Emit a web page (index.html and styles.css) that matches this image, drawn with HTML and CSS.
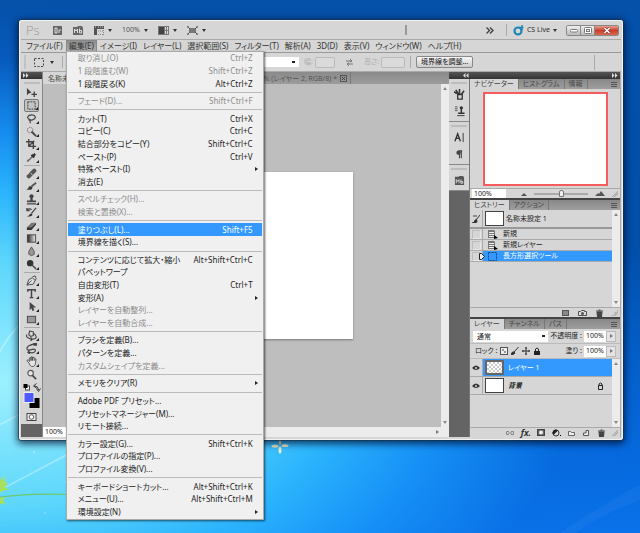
FILE: index.html
```html
<!DOCTYPE html>
<html lang="ja">
<head>
<meta charset="utf-8">
<title>Photoshop</title>
<link rel="stylesheet" href="styles.css">
</head>
<body>
<div class="desktop">
  <svg class="wallpaper" viewBox="0 0 640 533" preserveAspectRatio="none" aria-hidden="true">
    <path d="M-10 370Q10 330 24 322M-10 430L24 412M0 490L70 453" stroke="#fff" stroke-opacity=".35" stroke-width="1.5" fill="none"/>
    <path d="M560 533Q610 500 640 485V500Q600 515 575 533Z" fill="#fff" fill-opacity=".04"/>
    <path d="M0 497Q30 493 70 494.500" stroke="#6cc86a" stroke-width="1.200" fill="none"/>
    <path d="M0 477l2 4 3-6 0 6 3 4-4 1 5 4-5 0 -4 3zM0 498l6-1-3 3 3 5-4-2-2 2z" fill="#a8e05a"/>
    <g fill="#f3efc0"><ellipse cx="275" cy="446" rx="3.500" ry="1.600"/><ellipse cx="285" cy="445.500" rx="3.500" ry="1.600"/><ellipse cx="280" cy="450" rx="1.400" ry="3.500"/><ellipse cx="280" cy="442" rx="1.300" ry="2.500"/></g>
    <g fill="#fff" fill-opacity=".6"><circle cx="34" cy="452" r=".8"/><circle cx="45" cy="513" r=".7"/><circle cx="66" cy="482" r=".8"/><circle cx="30" cy="470" r=".5"/></g>
  </svg>

  <main class="window">
    <header class="titlebar">
      <span class="logo">Ps</span>
      <button class="tb" aria-label="Bridge"><svg width="9" height="9"><rect width="9" height="9" fill="#666"/><path d="M2 2v5h2V2zM6 4v3M6 4h2" stroke="#ddd" fill="none"/></svg></button>
      <button class="tb" aria-label="Mini Bridge"><svg width="10" height="9"><path d="M0 1h4l1-1h4l1 2v7H0z" fill="#666"/><path d="M1.500 7V3l1.500 2 1.500-2v4M6.500 2.500V7h2V4.500h-2" stroke="#ddd" fill="none"/></svg></button>
      <button class="tb wide" aria-label="表示"><svg width="10" height="9"><path d="M0 0h10v3H3v6H0z" fill="#555"/><path d="M1 1h1M4 1h1M6 1h1M8 1h1" stroke="#ccc"/><path d="M4 5h6M9.500 4v5M4 8.500h6" stroke="#888" stroke-dasharray="1 1"/></svg><i class="down"></i></button>
      <button class="tb wide">100%<i class="down"></i></button>
      <button class="tb wide" aria-label="配置"><svg width="11" height="9"><rect width="11" height="9" fill="#777"/><rect x="1" y="1" width="5" height="7" fill="#444"/><path d="M7.500 1v3M9.500 1v3M7.500 5v3M9.500 5v3" stroke="#ddd"/></svg><i class="down"></i></button>
      <button class="tb wide" aria-label="スクリーンモード"><svg width="11" height="9"><rect x="2" y="2" width="7" height="5" fill="#777"/><path d="M0 2V0h2M9 0h2v2M0 7v2h2M9 9h2V7M1 1l2 2M10 1L8 3M1 8l2-2M10 8L8 6" stroke="#555" fill="none"/></svg><i class="down"></i></button>
      <i class="bar"></i>
      <div class="title-right">
        <svg width="8" height="7" aria-hidden="true"><path d="M.5.5l3 3-3 3M4 .5l3 3-3 3" stroke="#444" stroke-width="1.400" fill="none"/></svg>
        <i class="rule"></i>
        <button class="cslive"><svg width="11" height="11"><circle cx="5" cy="6" r="3.500" stroke="#1d86b4" stroke-width="2.200" fill="none"/><path d="M9 0v5M6.500 2.500h4" stroke="#1d86b4" stroke-width="1.500"/></svg>CS Live<i class="down"></i></button>
        <div class="winbtns">
          <button aria-label="最小化"><svg width="8" height="7"><rect x=".5" y="2.500" width="7" height="2.500" rx="1" fill="#fff" stroke="#777"/></svg></button>
          <button aria-label="最大化"><svg width="8" height="7"><rect x=".5" y=".5" width="7" height="6" rx="1" fill="#fff" stroke="#777"/><rect x="2.500" y="2.500" width="3" height="2" fill="none" stroke="#777"/></svg></button>
          <button class="close" aria-label="閉じる"><svg width="8" height="7"><path d="M1.500 1l5 5M6.500 1l-5 5" stroke="#733" stroke-width="2.600"/><path d="M1.500 1l5 5M6.500 1l-5 5" stroke="#fff" stroke-width="1.500"/></svg></button>
        </div>
      </div>
    </header>

    <nav class="menubar">
      <button>ファイル(F)</button>
      <div class="open">
        <button class="active">編集(E)</button>
        <ul class="menu">
          <li><button disabled>取り消し(O)<kbd>Ctrl+Z</kbd></button></li>
          <li><button disabled>1 段階進む(W)<kbd>Shift+Ctrl+Z</kbd></button></li>
          <li><button>1 段階戻る(K)<kbd>Alt+Ctrl+Z</kbd></button></li>
          <li class="sep"></li>
          <li><button disabled>フェード(D)...<kbd>Shift+Ctrl+F</kbd></button></li>
          <li class="sep"></li>
          <li><button>カット(T)<kbd>Ctrl+X</kbd></button></li>
          <li><button>コピー(C)<kbd>Ctrl+C</kbd></button></li>
          <li><button>結合部分をコピー(Y)<kbd>Shift+Ctrl+C</kbd></button></li>
          <li><button>ペースト(P)<kbd>Ctrl+V</kbd></button></li>
          <li><button class="sub">特殊ペースト(I)</button></li>
          <li><button>消去(E)</button></li>
          <li class="sep"></li>
          <li><button disabled>スペルチェック(H)...</button></li>
          <li><button disabled>検索と置換(X)...</button></li>
          <li class="sep"></li>
          <li><button class="hot">塗りつぶし(L)...<kbd>Shift+F5</kbd></button></li>
          <li><button>境界線を描く(S)...</button></li>
          <li class="sep"></li>
          <li><button>コンテンツに応じて拡大・縮小<kbd>Alt+Shift+Ctrl+C</kbd></button></li>
          <li><button>パペットワープ</button></li>
          <li><button>自由変形(T)<kbd>Ctrl+T</kbd></button></li>
          <li><button class="sub">変形(A)</button></li>
          <li><button disabled>レイヤーを自動整列...</button></li>
          <li><button disabled>レイヤーを自動合成...</button></li>
          <li class="sep"></li>
          <li><button>ブラシを定義(B)...</button></li>
          <li><button>パターンを定義...</button></li>
          <li><button disabled>カスタムシェイプを定義...</button></li>
          <li class="sep"></li>
          <li><button class="sub">メモリをクリア(R)</button></li>
          <li class="sep"></li>
          <li><button>Adobe PDF プリセット...</button></li>
          <li><button>プリセットマネージャー(M)...</button></li>
          <li><button>リモート接続...</button></li>
          <li class="sep"></li>
          <li><button>カラー設定(G)...<kbd>Shift+Ctrl+K</kbd></button></li>
          <li><button>プロファイルの指定(P)...</button></li>
          <li><button>プロファイル変換(V)...</button></li>
          <li class="sep"></li>
          <li><button>キーボードショートカット...<kbd>Alt+Shift+Ctrl+K</kbd></button></li>
          <li><button>メニュー(U)...<kbd>Alt+Shift+Ctrl+M</kbd></button></li>
          <li><button class="sub">環境設定(N)</button></li>
        </ul>
      </div>
      <button>イメージ(I)</button>
      <button>レイヤー(L)</button>
      <button>選択範囲(S)</button>
      <button>フィルター(T)</button>
      <button>解析(A)</button>
      <button>3D(D)</button>
      <button>表示(V)</button>
      <button>ウィンドウ(W)</button>
      <button>ヘルプ(H)</button>
    </nav>

    <section class="options">
      <i class="vgrip"></i>
      <button class="preset" aria-label="長方形選択ツール"><svg width="10" height="9"><rect x=".5" y=".5" width="9" height="8" fill="none" stroke="#444" stroke-dasharray="2 1.500"/></svg><i class="down"></i></button>
      <i class="rule"></i>
      <button class="mode" aria-label="新規選択"><svg width="7" height="7"><rect width="6" height="6" fill="#fff" stroke="#666"/></svg></button>
      <select class="style" aria-label="スタイル"><option></option></select>
      <label class="dim">幅: <input disabled></label>
      <svg class="swap" width="7" height="7" aria-hidden="true"><path d="M0 2h6M4 0l2 2-2 1M7 5H1M3 3.500L1 5l2 2" stroke="#777" fill="none"/></svg>
      <label class="dim tall">高さ: <input disabled></label>
      <i class="rule"></i>
      <button class="refine">境界線を調整...</button>
      <i class="rule far"></i>
    </section>

    <div class="work">
      <aside class="tools">
        <div class="darkhead"><svg width="6" height="5"><path d="M0 0l2.500 2.500L0 5zM3 0l2.500 2.500L3 5z" fill="#ddd"/></svg></div>
        <i class="grip"></i>
        <div class="toolset">
          <button aria-label="移動"><svg viewBox="0 0 12 12"><path d="M1 1v8l2-2 3-1z" fill="#444"/><path d="M9 5v6M6 8h6" stroke="#444" stroke-width="1.500"/></svg></button>
          <button class="picked" aria-label="長方形選択"><svg viewBox="0 0 12 12"><rect x="2" y="2" width="8" height="8" fill="none" stroke="#333" stroke-dasharray="2 1"/></svg></button>
          <button class="more" aria-label="なげなわ"><svg viewBox="0 0 12 12"><path d="M4 7C0 6 2 2 6 2s6 3 2 5-6 0-4 0-1 2 1 4" fill="none" stroke="#444" stroke-width="1.300"/></svg></button>
          <button class="more" aria-label="クイック選択"><svg viewBox="0 0 12 12"><circle cx="4.500" cy="4.500" r="3" fill="none" stroke="#666" stroke-dasharray="1.500 1"/><path d="M6 6l5 5" stroke="#444" stroke-width="2"/></svg></button>
          <button class="more" aria-label="切り抜き"><svg viewBox="0 0 12 12"><path d="M3 0v8h8M0 3h8v8M3 8l6-6" fill="none" stroke="#444" stroke-width="1.500"/></svg></button>
          <button class="more" aria-label="スポイト"><svg viewBox="0 0 12 12"><path d="M2 10l5-5M1.500 10.500l1-2" stroke="#666" stroke-width="1.500"/><path d="M6 3l3 3M7 5l3-3" stroke="#333" stroke-width="2.500"/></svg></button>
          <hr>
          <button class="more" aria-label="修復ブラシ"><svg viewBox="0 0 12 12"><path d="M3 9l6-6" stroke="#555" stroke-width="4.500" stroke-linecap="round"/><path d="M5 5.500l2 2M4 4Q2 4 2 7" stroke="#ddd" fill="none"/></svg></button>
          <button class="more" aria-label="ブラシ"><svg viewBox="0 0 12 12"><path d="M6 6l5-4" stroke="#555" stroke-width="2"/><path d="M0 9q3 0 3-3 3-1 4 1 0 4-7 2z" fill="#333"/></svg></button>
          <button class="more" aria-label="スタンプ"><svg viewBox="0 0 12 12"><circle cx="6" cy="2.500" r="2.300" fill="#444"/><path d="M5 4h2l.5 3H11v2H1V7h3.500zM1 10h10v1.500H1z" fill="#444"/></svg></button>
          <button class="more" aria-label="ヒストリーブラシ"><svg viewBox="0 0 12 12"><path d="M1 10q3 0 3-2 2-2 3 0 0 3-6 2z" fill="#333"/><path d="M6 7l5-6M1 3q3-2 5 0M1 1v3h3" stroke="#444" stroke-width="1.400" fill="none"/></svg></button>
          <button class="more" aria-label="消しゴム"><svg viewBox="0 0 12 12"><path d="M1 8l5-5h5l-5 5z" fill="#777"/><path d="M1 8h5l5-5v2l-5 6H1z" fill="#333"/></svg></button>
          <button class="more" aria-label="グラデーション"><svg viewBox="0 0 12 12"><defs><linearGradient id="g"><stop stop-color="#222"/><stop offset="1" stop-color="#eee"/></linearGradient></defs><rect x="1.500" y="2" width="9" height="8" fill="url(#g)" stroke="#444"/></svg></button>
          <button class="more" aria-label="ぼかし"><svg viewBox="0 0 12 12"><path d="M6 1Q2 6 3 9q3 3 6 0 1-3-3-8z" fill="#999" stroke="#555"/></svg></button>
          <button class="more" aria-label="覆い焼き"><svg viewBox="0 0 12 12"><circle cx="4.500" cy="4.500" r="3.500" fill="#333"/><path d="M6 6l5 5" stroke="#444" stroke-width="1.500"/></svg></button>
          <hr>
          <button class="more" aria-label="ペン"><svg viewBox="0 0 12 12"><path d="M1 11l2-6 4-2 3 3-2 4zM1 11l5-5M7 2l3-1 1 3-1 2" fill="#ddd" stroke="#444"/></svg></button>
          <button class="more" aria-label="文字"><svg viewBox="0 0 12 12"><path d="M2 4V2h8v2M6 2v9M4 10.500h4" fill="none" stroke="#444" stroke-width="1.600"/></svg></button>
          <button class="more" aria-label="パス選択"><svg viewBox="0 0 12 12"><path d="M4 1v9l2-2 1 3 2-1-1-3h3z" fill="#444"/></svg></button>
          <button class="more" aria-label="長方形"><svg viewBox="0 0 12 12"><rect x="1.500" y="2.500" width="9" height="7" fill="#999" stroke="#444"/></svg></button>
          <hr>
          <button class="more" aria-label="3D 回転"><svg viewBox="0 0 12 12"><path d="M4 1l4 1v4L5 7 3 5zM1 5q-2 3 5 5 6 0 5-3-1-3-3-3M5 8l2 2-2 2" fill="none" stroke="#444" stroke-width="1.200"/></svg></button>
          <button class="more" aria-label="3D カメラ"><svg viewBox="0 0 12 12"><path d="M9 1Q1 3 1 6t6 1q4-1 3 2-2 3-7 1M4 8L2 10l2 2" fill="none" stroke="#444" stroke-width="1.300"/><path d="M8 0h4v3H8z" fill="#444"/></svg></button>
          <button class="more" aria-label="手のひら"><svg viewBox="0 0 12 12"><path d="M3.500 8L1 5l1.500-1L4 6V2h1.500v3V1H7v4l.5-3.500H9V5l1-2 1 .5-1 6q-1 2.500-4 2-2-1-2.500-3.500z" fill="#e6e6e6" stroke="#444" stroke-width=".9"/></svg></button>
          <button aria-label="ズーム"><svg viewBox="0 0 12 12"><circle cx="5" cy="4.500" r="3" fill="#e4e4e4" stroke="#555" stroke-width="1.200"/><path d="M7 7l4 4" stroke="#444" stroke-width="1.800"/></svg></button>
        </div>
        <svg class="swatches" width="18" height="41" viewBox="0 0 18 41" role="img" aria-label="描画色と背景色"><rect x="2" y="5" width="4" height="4" fill="#fff" stroke="#444"/><rect y="3" width="4" height="4" fill="#000"/><path d="M11 5q4 0 4 4M13 2.500L10 5l3 2M13 7.500l2 3 2-3" fill="none" stroke="#333"/><rect x="6" y="17" width="10" height="10" fill="#000"/><rect x=".5" y="11.500" width="10" height="10" fill="#4f5bff" stroke="#eee"/><rect x="3.500" y="32.500" width="9" height="7" fill="#f2f2f2" stroke="#444"/><circle cx="8" cy="36" r="2.300" fill="#fff" stroke="#555"/></svg>
      </aside>

      <section class="document">
        <div class="doctabs">
          <button class="current">名称未設定 1</button>
          <button>名称未設定 2 @ 100% (レイヤー 2, RGB/8) * <svg width="7" height="7"><rect x=".5" y=".5" width="6" height="6" fill="none" stroke="#555"/><path d="M2 2l3 3M5 2L2 5" stroke="#444"/></svg></button>
        </div>
        <div class="view">
          <div class="stage"><div class="paper"></div></div>
          <div class="vscroll"><i class="tri up"></i><i class="tri dn"></i></div>
        </div>
        <footer class="status"><input value="100%" aria-label="倍率"><i class="tri rt"></i></footer>
      </section>

      <aside class="dock">
        <div class="darkhead both"><svg width="6" height="5"><path d="M2.500 0L0 2.500 2.500 5zM5.500 0L3 2.500 5.500 5z" fill="#ddd"/></svg><svg width="6" height="5"><path d="M0 0l2.500 2.500L0 5zM3 0l2.500 2.500L3 5z" fill="#ddd"/></svg></div>
        <div class="dockrow">
          <div class="icons">
            <div class="group"><i class="grip"></i>
              <button aria-label="ブラシ"><svg viewBox="0 0 12 12"><path d="M4 6h5v5H4z" fill="none" stroke="#333" stroke-width="1.400"/><path d="M5 6L2 1M6 6V0M8 6l3-4M3 5L0 3" stroke="#333" stroke-width="1.700"/></svg></button>
              <button aria-label="コピーソース"><svg viewBox="0 0 12 12"><path d="M1 1h3M1 3h3M1 5h3" stroke="#555"/><circle cx="8" cy="2" r="1.800" fill="#333"/><path d="M8 2v6M4.500 8h7" stroke="#333" stroke-width="1.600"/><path d="M3.500 10.500h8" stroke="#333"/></svg></button></div>
            <div class="group"><i class="grip"></i>
              <button aria-label="文字"><svg viewBox="0 0 12 12"><path d="M1 10l3-8 3 8M2 7h4" fill="none" stroke="#333" stroke-width="1.500"/><path d="M10 1v10" stroke="#333"/></svg></button>
              <button aria-label="段落"><svg viewBox="0 0 12 12"><path d="M8 2v8M6 2v8M9 2H5" stroke="#444" stroke-width="1.200"/><circle cx="5" cy="4" r="2.400" fill="#444"/></svg></button></div>
            <div class="group one"><i class="grip"></i>
              <button aria-label="Mini Bridge"><svg viewBox="0 0 12 12"><path d="M1 2h4l1-1h4l1 2v8H1z" fill="#555"/><path d="M2.500 9V5L4 7l1.500-2v4M7.500 5v4h2V7h-2" stroke="#ddd" fill="none"/></svg></button></div>
          </div>

          <div class="panels">
            <section class="panel nav">
              <div class="tabs"><button class="on">ナビゲーター</button><button>ヒストグラム</button><button>情報</button><i class="flyout"></i></div>
              <div class="preview"></div>
              <div class="zoombar"><input value="100%" aria-label="表示倍率"><svg width="6" height="4"><path d="M0 4l3-3 3 3z" fill="#555"/></svg><input type="range" aria-label="ズーム" value="50"><svg width="10" height="5"><path d="M0 5l3-3 1 1 2-3 4 5z" fill="#555"/></svg><i class="corner"></i></div>
            </section>

            <section class="panel history">
              <div class="tabs"><button class="on">ヒストリー</button><button>アクション</button><i class="flyout"></i></div>
              <div class="scrollable">
                <div class="list">
                  <div class="snap"><span class="cell"><svg width="8" height="8"><path d="M0 8q3 0 3-3 2-1 2 1 0 3-5 2zM4 5l4-5" fill="#333" stroke="#333"/><path d="M1 1h4" stroke="#444"/></svg></span><span class="thumb"></span>名称未設定 1</div>
                  <div class="state"><span class="cell"><i class="box"></i></span><svg width="10" height="9"><path d="M0 0h6l1 1v7H0z" fill="#777"/><path d="M1 2.500h5M1 4.500h5M1 6.500h5" stroke="#eee"/><path d="M6 5l4 3-4 1z" fill="#000"/></svg>新規</div>
                  <div class="state"><span class="cell"><i class="box"></i></span><svg width="10" height="9"><path d="M0 0h6l1 1v7H0z" fill="#777"/><path d="M1 2.500h5M1 4.500h5M1 6.500h5" stroke="#eee"/><path d="M6 5l4 3-4 1z" fill="#000"/></svg>新規レイヤー</div>
                  <div class="state sel"><span class="cell"><i class="box"></i><svg class="pointer" width="7" height="7"><path d="M.5.5h2l3 3-3 3h-2z" fill="#eee" stroke="#222"/></svg></span><svg width="10" height="9"><rect x=".5" y=".5" width="8" height="8" fill="none" stroke="#124a86" stroke-dasharray="2 1"/></svg>長方形選択ツール</div>
                </div>
                <div class="vscroll"><i class="tri up"></i><i class="tri dn"></i></div>
              </div>
              <div class="foot"><button aria-label="新規ドキュメント"><svg width="9" height="8"><rect x="1.500" y="1.500" width="6" height="5" fill="#888" stroke="#555"/></svg></button><button aria-label="スナップショット"><svg width="9" height="8"><path d="M.5 2.500h2l1-1h3v1h2v4h-8z" fill="#ddd" stroke="#555"/><circle cx="4.500" cy="4.500" r="1.500" fill="#555"/></svg></button><button aria-label="削除"><svg width="9" height="8"><path d="M2 3h5l-.5 5h-4zM1 2h7M3.500 1h2" fill="#444" stroke="#444"/></svg></button><i class="corner"></i></div>
            </section>

            <section class="panel layers">
              <div class="tabs"><button class="on">レイヤー</button><button>チャンネル</button><button>パス</button><i class="flyout"></i></div>
              <div class="row"><select aria-label="描画モード"><option>通常</option></select><label>不透明度 : <input value="100%"></label><button class="step" aria-label="不透明度を調整"><i class="tri rt"></i></button></div>
              <div class="row lock"><span>ロック :</span>
                <svg width="8" height="8"><rect x=".5" y=".5" width="7" height="7" fill="#eee" stroke="#555"/><path d="M2 2h2v2H2zM4 4h2v2H4z" fill="#999"/></svg>
                <svg width="8" height="8"><path d="M7.500 0L3 5M0 8q1-4 3-3t0 2z" stroke="#333" fill="#333"/></svg>
                <svg width="8" height="8"><path d="M4 0v8M0 4h8M3 1h2M3 7h2M1 3v2M7 3v2" stroke="#333"/></svg>
                <svg width="8" height="8"><path d="M1 4h6v4H1z" fill="#222"/><path d="M2.500 4V2q1.500-2 3 0v2" fill="none" stroke="#222"/></svg>
                <label class="fill">塗り : <input value="100%"></label><button class="step" aria-label="塗りを調整"><i class="tri rt"></i></button></div>
              <div class="scrollable">
                <div class="list">
                  <div class="layer sel"><span class="cell"><svg width="8" height="6"><path d="M0 3q4-5 8 0-4 4-8 0z" fill="#333"/><circle cx="4" cy="3" r="1" fill="#ddd"/></svg></span><span class="thumb check"></span>レイヤー 1</div>
                  <div class="layer"><span class="cell"><svg width="8" height="6"><path d="M0 3q4-5 8 0-4 4-8 0z" fill="#333"/><circle cx="4" cy="3" r="1" fill="#ddd"/></svg></span><span class="thumb"></span><em>背景</em><svg class="padlock" width="7" height="8"><path d="M1.500 3.500h4v4h-4zM2 3.500V2q1.500-2 3 0v1.500" fill="none" stroke="#222"/></svg></div>
                </div>
                <div class="vscroll"><i class="tri up"></i><i class="tri dn"></i></div>
              </div>
              <div class="foot seven">
                <button aria-label="リンク"><svg width="10" height="8"><path d="M3 4h4M4 2.500H1.500v3H4M6 2.500h2.500v3H6" stroke="#888" fill="none"/></svg></button>
                <button class="fx">fx.</button>
                <button aria-label="マスク"><svg width="9" height="8"><rect x=".5" y=".5" width="7" height="6" fill="#666" stroke="#444"/><circle cx="4" cy="3.500" r="2" fill="#eee"/></svg></button>
                <button aria-label="調整"><svg width="9" height="8"><circle cx="4" cy="4" r="3" fill="#ddd" stroke="#333"/><path d="M1.500 6L6 1.500A3 3 0 0 0 1.500 6z" fill="#222"/><path d="M8 6h1v1H8z"/></svg></button>
                <button aria-label="グループ"><svg width="9" height="8"><path d="M1.500 2.500h2l1 1h3v3h-6z" fill="#eee" stroke="#666"/></svg></button>
                <button aria-label="新規レイヤー"><svg width="9" height="8"><path d="M1.500 4v2.500h5v-5H4V4z" fill="#eee" stroke="#555"/></svg></button>
                <button aria-label="削除"><svg width="9" height="8"><path d="M2 3h5l-.5 5h-4zM1 2h7M3.500 1h2" fill="#444" stroke="#444"/></svg></button>
                <i class="corner"></i></div>
            </section>
          </div>
        </div>
      </aside>
    </div>
  </main>
</div>
</body>
</html>
```
FILE: styles.css
```css
* { box-sizing: border-box; }
body {
  margin: 0;
  font: 8px/12px "Noto Sans", "Noto Sans CJK JP", sans-serif;
  font-feature-settings: "palt";
  color: #222;
}
button, input, select, kbd { font: inherit; font-feature-settings: inherit; color: inherit; }
button { border: 0; padding: 0; margin: 0; background: none; white-space: nowrap; }
input { min-width: 0; border: 0; padding: 0 2px; background: #fff; border-radius: 0; }
select { appearance: none; border: 0; border-radius: 0; }
svg { flex: none; }

.desktop {
  position: relative;
  display: flex;
  min-height: 100vh;
  padding: 20px 17px 93px 19px;
  background:
    radial-gradient(105% 72% at 0% 72%, #9cf0ff 0%, #5cd6fb 32%, #2bb4fd 50%, rgba(24, 150, 250, .85) 66%, rgba(10, 110, 225, .35) 85%, rgba(10, 100, 220, 0) 100%),
    linear-gradient(#0550a8 0%, #024ea8 45%, #0568dc 85%, #0a72ea 100%);
}
.wallpaper { position: absolute; inset: 0; width: 100%; height: 100%; }

.window {
  position: relative;
  flex: 1;
  display: flex;
  flex-direction: column;
  min-width: 0;
  padding: 1px 2px 3px;
  background: #d6d6d6;
  border-radius: 3px;
  box-shadow: 0 0 0 1px rgba(20, 50, 70, .6), inset 0 0 0 1px #f2f2f2, 0 2px 7px 2px rgba(0, 10, 40, .7);
}
.titlebar, .menubar, .options { display: flex; align-items: center; flex: none; }
.titlebar { height: 19px; border-bottom: 1px solid #aaa; padding-left: 5px; }
.logo { font: 300 13px/18px "Open Sans", sans-serif; color: #999; width: 27px; }
.tb { display: flex; align-items: center; gap: 4px; margin-right: 11px; color: #555; font-size: 7px; }
.tb.wide { margin-right: 10px; }
.down { border: 2px solid transparent; border-top: 3px solid #333; border-bottom: 0; }
.bar { width: 2px; height: 10px; background: #999; margin-left: 189px; }
.title-right { display: flex; align-items: center; margin-left: auto; gap: 12px; padding-right: 2px; }
.rule { width: 1px; height: 12px; background: #aaa; }
.title-right .rule { margin-right: -6px; }
.cslive { display: flex; align-items: center; gap: 3px; color: #333; font-size: 7px; margin-right: -3px; }
.winbtns { display: flex; border: 1px solid #888; border-radius: 2px; overflow: hidden; }
.winbtns button { display: flex; align-items: center; justify-content: center; width: 14px; height: 9px; background: linear-gradient(#f0f0f0, #bbb); border-right: 1px solid #888; }
.winbtns .close { width: 23px; border: 0; background: linear-gradient(#e8a08c, #c8402c 50%, #d86a50); }

.menubar { height: 13px; padding-left: 2px; border-bottom: 1px solid #999; }
.menubar > button, .open > button { padding: 0 3px; line-height: 12px; color: #333; }
.open { position: relative; }
.active { display: block; background: linear-gradient(#8c8c8c, #b0b0b0); box-shadow: inset 0 0 0 1px #888; }
.menu {
  position: absolute;
  z-index: 5;
  top: 11px;
  left: 0;
  display: flex;
  flex-direction: column;
  min-width: 198px;
  min-height: 469px;
  margin: 0;
  padding: 0 1px 1px;
  list-style: none;
  background: #f0f0f0;
  border: 1px solid #aaa;
  box-shadow: 1px 1px 2px rgba(0, 0, 0, .6);
}
.menu li { display: flex; flex: 1 1 12px; }
.menu button { position: relative; flex: 1; display: flex; align-items: center; justify-content: space-between; padding: 0 9px 0 10px; color: #222; }
.menu button:disabled { color: #8c8c8c; }
.menu .hot { background: #39f; color: #fff; }
.menu .sep { flex: 0 0 5px; align-items: center; }
.menu .sep::before { content: ""; flex: 1; height: 1px; background: #bbb; }
.sub::after { content: ""; position: absolute; right: 4px; border: 2px solid transparent; border-left: 3px solid #222; border-right: 0; }

.options { height: 19px; padding-left: 3px; gap: 5px; border-bottom: 1px solid #aaa; }
.vgrip { width: 2px; height: 14px; background: #c2c2c2; }
.preset { display: flex; align-items: center; gap: 6px; padding: 0 3px; }
.mode { display: flex; align-items: center; justify-content: center; width: 11px; height: 11px; border: 1px solid #777; border-radius: 2px; background: #bbb; }
.style { width: 76px; height: 10px; margin-left: 139px; background: #fff linear-gradient(#222, #222) no-repeat right 4px center / 3px 2px; }
.dim { display: flex; align-items: center; gap: 2px; color: #b0b0b0; white-space: nowrap; font-size: 7px; }
.dim input { width: 20px; height: 11px; background: #dadada; border: 1px solid #bbb; border-radius: 2px; }
.dim.tall input { width: 24px; }
.swap { margin: 0 6px; }
.refine { height: 12px; padding: 0 4px; font-size: 7px; line-height: 10px; border: 1px solid #888; border-radius: 2px; background: linear-gradient(#f8f8f8, #ccc); color: #111; }
.far { height: 15px; margin-left: auto; margin-right: 26px; }

.work { flex: 1; display: flex; min-height: 0; border-right: 1px solid #aaa; }
.tools { width: 22px; flex: none; background: #646464; display: flex; flex-direction: column; border-right: 1px solid #888; }
.tools > .grip { padding-top: 1px; }
.darkhead { display: flex; align-items: center; height: 7px; padding: 0 2px; background: linear-gradient(#555, #333); flex: none; }
.both { justify-content: space-between; padding-left: 14px; }
.grip { display: block; height: 7px; background: linear-gradient(#bdbdbd, #bdbdbd) no-repeat center / 16px 2px #d6d6d6; flex: none; }
.toolset { display: flex; flex-direction: column; background: #d6d6d6; }
.toolset button { position: relative; display: flex; align-items: center; justify-content: center; height: 13px; margin: 0 3px; }
.toolset svg { width: 11px; height: 11px; }
.toolset .picked { border: 1px solid #777; border-radius: 2px; background: #c4c4c4; }
.picked::after, .more::after { content: ""; position: absolute; right: 0; bottom: 1px; border-left: 3px solid transparent; border-bottom: 3px solid #222; }
.toolset hr { width: 16px; height: 1px; margin: 1px auto; border: 0; background: #aaa; }
.swatches { width: 21px; height: 43px; padding: 0 0 2px 2px; background: #d6d6d6; }

.document { flex: 1; min-width: 0; display: flex; flex-direction: column; }
.doctabs { display: flex; height: 12px; background: linear-gradient(#8a8a8a, #9c9c9c); padding-right: 98px; overflow: hidden; }
.doctabs button { display: flex; align-items: center; gap: 3px; padding: 0 3px 0 5px; font-size: 7px; line-height: 11px; color: #555; border-right: 1px solid #777; }
.doctabs .current { flex: 1; min-width: 0; background: #d6d6d6; color: #444; }
.view { flex: 1; display: flex; min-height: 0; }
.stage { flex: 1; display: flex; align-items: center; justify-content: center; background: #bebebe; }
.paper { width: 56%; aspect-ratio: 4 / 3; background: #fff; box-shadow: 0 1px 2px #777; }
.vscroll { width: 8px; flex: none; display: flex; flex-direction: column; justify-content: space-between; align-items: center; padding: 3px 0; background: #ececec; }
.tri { border: 2px solid transparent; }
.up { border-bottom: 3px solid #888; border-top: 0; }
.dn { border-top: 3px solid #888; border-bottom: 0; }
.rt { border-left: 3px solid #777; border-right: 0; }
.status { display: flex; align-items: center; justify-content: space-between; height: 10px; padding-right: 10px; background: #ececec; font-size: 7px; }
.status input { width: 60px; height: 10px; line-height: 10px; }

.dock { width: 171px; flex: none; display: flex; flex-direction: column; }
.dockrow { flex: 1; display: flex; min-height: 0; background: #d6d6d6; }
.icons { width: 21px; background: #646464; border-right: 1px solid #777; }
.group { display: flex; flex-direction: column; background: #d6d6d6; border-bottom: 1px solid #888; padding-bottom: 1px; }
.group button { display: flex; align-items: center; justify-content: center; height: 17px; }
.group svg { width: 11px; height: 11px; }
.panels { flex: 1; min-width: 0; display: flex; flex-direction: column; font-size: 7px; }
.panel { display: flex; flex-direction: column; border-bottom: 2px solid #444; }
.tabs { display: flex; align-items: stretch; height: 10px; flex: none; background: linear-gradient(#888, #9e9e9e); }
.tabs button { padding: 0 4px; line-height: 10px; color: #484848; border-right: 1px solid #777; }
.tabs .on { background: #d6d6d6; color: #444; }
.flyout { width: 6px; height: 5px; margin: 3px 3px 0 auto; background: repeating-linear-gradient(#555 0 1px, transparent 1px 2px); }
.preview { margin: 3px 12px 2px 13px; height: 94px; background: #fff; border: 2px solid #f55c5c; }
.zoombar { display: flex; align-items: center; height: 10px; gap: 7px; border-top: 1px solid #aaa; padding-left: 2px; }
.zoombar input:first-child { width: 34px; height: 9px; line-height: 9px; padding: 0 2px; margin-right: 8px; }
.zoombar input[type="range"] { appearance: none; flex: 1; height: 8px; margin: 0; background: linear-gradient(#aaa, #aaa) no-repeat center / 100% 2px; }
.zoombar input[type="range"]::-webkit-slider-thumb { appearance: none; width: 5px; height: 7px; border: 1px solid #777; border-radius: 2px 2px 0 0; background: #eee; }
.corner { width: 6px; height: 6px; margin-right: 2px; background: linear-gradient(135deg, transparent 50%, #aaa 50%, #d6d6d6 65%, #aaa 66%, #d6d6d6 85%); }
.scrollable { flex: 1; display: flex; }
.list { flex: 1; min-width: 0; }
.cell { position: relative; display: flex; align-items: center; justify-content: center; align-self: stretch; width: 13px; border-right: 1px solid #aaa; flex: none; }
.box { width: 9px; height: 9px; border: 1px solid #bbb; border-right-color: #e8e8e8; border-bottom-color: #e8e8e8; }
.pointer { position: absolute; right: -4px; z-index: 1; }
.thumb { width: 19px; height: 15px; background: #fff; border: 1px solid #444; margin: 0 2px; flex: none; }
.layer .thumb { margin-right: 4px; }
.check { border: 2px solid #666; background: repeating-conic-gradient(#ccc 0 25%, #fff 0 50%) 0 0 / 4px 4px; }
.snap { display: flex; align-items: center; height: 19px; border-bottom: 2px solid #999; }
.state { display: flex; align-items: center; height: 11px; border-bottom: 1px solid #aaa; gap: 5px; line-height: 10px; }
.state.sel, .layer.sel { color: #fff; background: linear-gradient(90deg, #d6d6d6 13px, #39f 13px); }
.history { height: 119px; }
.foot { display: flex; align-items: center; justify-content: flex-end; gap: 8px; height: 10px; flex: none; border-top: 1px solid #aaa; }
.foot button { display: flex; line-height: 9px; }
.foot.seven { gap: 6px; }
.fx { font: italic 9px/9px "Noto Sans", sans-serif; font-weight: 600; }
.layers { flex: 1; border-bottom: 0; }
.row { display: flex; align-items: center; height: 15px; padding: 0 4px 0 3px; border-bottom: 1px solid #bbb; flex: none; }
.row select { flex: 1; min-width: 0; height: 11px; padding: 0 4px; margin-right: 2px; background: #fff linear-gradient(#222, #222) no-repeat right 3px center / 3px 2px; }
.row label { display: flex; align-items: center; gap: 2px; white-space: nowrap; }
.row input { width: 22px; height: 11px; }
.step { display: flex; align-items: center; justify-content: center; width: 10px; height: 11px; border: 1px solid #bbb; background: #e4e4e4; }
.lock { gap: 3px; padding-left: 5px; }
.lock .fill { margin-left: auto; }
.lock .step { margin-left: -3px; }
.layer { display: flex; align-items: center; height: 18px; border-bottom: 1px solid #aaa; }
.layer em { font-weight: 700; }
.padlock { margin-left: auto; margin-right: 8px; }
```
